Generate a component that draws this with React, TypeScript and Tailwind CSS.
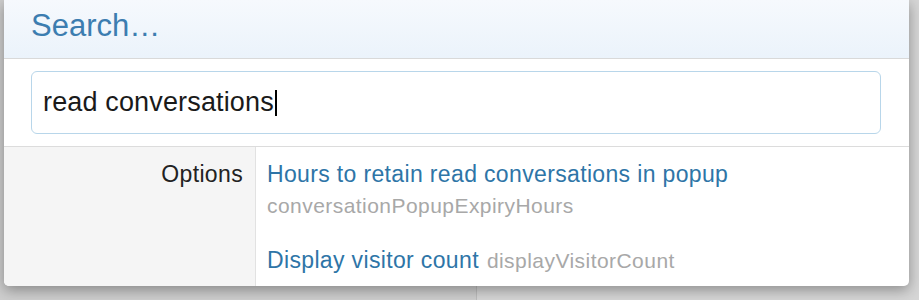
export default function App() {
  return (
    <div className="relative w-[919px] h-[300px] overflow-hidden font-['Liberation_Sans',Arial,sans-serif]">
      {/* page behind the overlay */}
      <div className="flex h-full">
        <div className="w-[477px] h-full bg-[#cecece] border-r border-[#bdbdbd]" />
        <div className="flex-1 h-full bg-[#d6d6d6]" />
      </div>

      {/* search dialog */}
      <div className="absolute left-[4px] top-0 w-[905px] bg-white rounded-b-[5px] shadow-[0_4px_14px_rgba(0,0,0,0.35)] overflow-hidden">
        <div className="h-[59px] bg-gradient-to-b from-[#f6f9fd] to-[#ebf3fb] border-b border-[#d9d9d9] pl-[27px] pt-[10px]">
          <h2 className="text-[31px] leading-[31px] text-[#3c7db0]">Search…</h2>
        </div>

        <div className="px-[27px] py-[12px] border-b border-[#dcdcdc]">
          <div className="flex items-center h-[63px] w-[850px] rounded-[6px] border border-[#b8d6ea] pl-[11px] text-[27px] leading-none tracking-[0.15px] text-[#1a1a1a]">
            <span>read conversations</span>
            <span className="ml-[1px] w-[2px] h-[26px] bg-black" />
          </div>
        </div>

        <div className="flex">
          <div className="w-[252px] shrink-0 bg-[#f5f5f5] border-r border-[#e2e2e2] pt-[13px] pr-[12px] text-right">
            <span className="text-[23px] leading-[28px] tracking-[0.35px] text-[#222]">Options</span>
          </div>
          <div className="flex-1 pl-[11px] pt-[13px] pb-[9px]">
            <div className="text-[23px] leading-[28px] tracking-[0.35px] text-[#2e75a7]">
              Hours to retain read conversations in popup
            </div>
            <div className="mt-[4px] text-[21px] leading-[28px] tracking-[0.45px] text-[#a8a8a8]">
              conversationPopupExpiryHours
            </div>
            <div className="mt-[26px] leading-[28px]">
              <span className="text-[23px] tracking-[0.35px] text-[#2e75a7]">Display visitor count</span>
              <span className="ml-[8px] text-[21px] tracking-[0.45px] text-[#a8a8a8]">displayVisitorCount</span>
            </div>
          </div>
        </div>
      </div>
    </div>
  );
}
